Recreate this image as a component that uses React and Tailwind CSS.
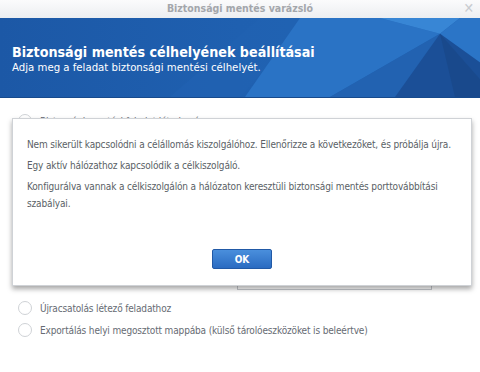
import React from "react";

// Varázsló ablak: fejléc, választógombok, fölötte a hibaüzenet párbeszédablaka.
function Radio({ checked }) {
  return (
    <span className="flex h-[14px] w-[14px] shrink-0 items-center justify-center rounded-full border border-[#cfd2d6] bg-white">
      {checked && <span className="h-[6px] w-[6px] rounded-full bg-[#3d4a5c]" />}
    </span>
  );
}

function HeaderArt() {
  return (
    <svg className="absolute inset-0 h-full w-full" viewBox="0 0 480 80" preserveAspectRatio="none">
      <polygon points="170,80 260,0 310,0 240,80" fill="#2262b2" opacity="0.6" />
      <polygon points="300,0 380,0 440,16 330,80 245,80" fill="#2a73c5" />
      <polygon points="380,0 460,0 440,16" fill="#3886d5" />
      <polygon points="460,0 480,0 480,45 440,16" fill="#2b75c7" />
      <polygon points="440,16 395,80 330,80" fill="#2262b1" />
      <polygon points="440,16 480,45 480,80 395,80" fill="#1b4f97" />
      <polygon points="440,16 480,62 480,80 455,80" fill="#184788" opacity="0.7" />
    </svg>
  );
}

function Field() {
  return (
    <div className="flex h-[24px] items-center justify-end">
      <span className="mr-[30px] h-[24px] w-[195px] border border-[#c6c9ce] bg-white" />
    </div>
  );
}

export default function App() {
  return (
    <div className="relative h-[372px] w-[480px] overflow-hidden bg-white font-['DejaVu_Sans_Condensed','DejaVu_Sans',sans-serif]">
      <div className="relative flex h-[18px] items-center justify-center bg-gradient-to-b from-[#fbfbfc] to-[#eceef1]">
        <span className="text-[10.5px] font-bold text-[#a3a6ab]">Biztonsági mentés varázsló</span>
        <span className="absolute right-[6px] top-[1px] text-[14px] leading-[14px] text-[#c8cbd0]">✕</span>
      </div>

      <div className="relative h-[80px] overflow-hidden border-b border-[#174a8c] bg-gradient-to-r from-[#1c58a6] via-[#1f60b0] to-[#2265b4]">
        <HeaderArt />
        <div className="relative px-[12px] pt-[26px] text-white">
          <div className="text-[14.2px] font-bold leading-[17px]">Biztonsági mentés célhelyének beállításai</div>
          <div className="text-[11.3px] leading-[14px]">Adja meg a feladat biztonsági mentési célhelyét.</div>
        </div>
      </div>

      <div className="flex flex-col px-[18px] pt-[16px] text-[10px] tracking-[-0.15px] text-[#666b73]">
        <label className="flex h-[14px] items-center gap-[8px]">
          <Radio checked />
          <span>Biztonsági mentési feladat létrehozása</span>
        </label>
        <div className="mt-[10px] flex flex-col gap-[8px] pl-[22px]">
          <Field />
          <Field />
          <Field />
          <Field />
          <Field />
        </div>
        <div className="mt-[11px] flex flex-col gap-[8px]">
          <label className="flex h-[14px] items-center gap-[8px]">
            <Radio />
            <span>Újracsatolás létező feladathoz</span>
          </label>
          <label className="flex h-[14px] items-center gap-[8px]">
            <Radio />
            <span>Exportálás helyi megosztott mappába (külső tárolóeszközöket is beleértve)</span>
          </label>
        </div>
      </div>

      <div className="absolute left-[12px] top-[118px] flex h-[168px] w-[460px] flex-col border border-[#cfd2d6] bg-white px-[14px] pt-[17px] shadow-[0_3px_5px_rgba(0,0,0,0.35)]">
        <div className="flex flex-col gap-[4px] text-[10px] leading-[17px] tracking-[-0.15px] text-[#5a5f66]">
          <p>Nem sikerült kapcsolódni a célállomás kiszolgálóhoz. Ellenőrizze a következőket, és próbálja újra.</p>
          <p>Egy aktív hálózathoz kapcsolódik a célkiszolgáló.</p>
          <p>Konfigurálva vannak a célkiszolgálón a hálózaton keresztüli biztonsági mentés porttovábbítási szabályai.</p>
        </div>
        <div className="mt-auto flex justify-center pb-[16px]">
          <button className="h-[20px] w-[60px] rounded-[2px] border border-[#2159a6] bg-gradient-to-b from-[#4a8fdc] to-[#2a6bc1] text-[10px] font-bold text-white">
            OK
          </button>
        </div>
      </div>
    </div>
  );
}
